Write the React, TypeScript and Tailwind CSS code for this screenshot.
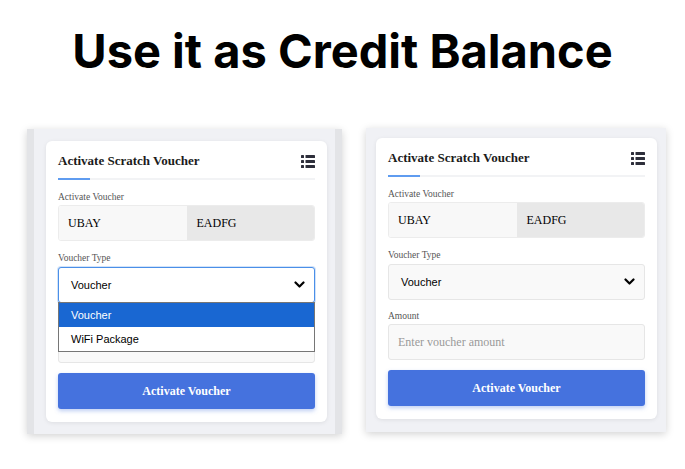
import React from "react";

const serif = { fontFamily: '"Liberation Serif", "Times New Roman", serif' };
const sans = { fontFamily: '"Liberation Sans", Arial, sans-serif' };

function ListIcon() {
  return (
    <svg width="14" height="13" viewBox="0 0 14 13" className="text-[#2e2f3b]">
      {[0, 5, 10].map((y) => (
        <g key={y} fill="currentColor">
          <rect x="0" y={y} width="3" height="3" rx="0.6" />
          <rect x="4.5" y={y} width="9.5" height="3" rx="0.6" />
        </g>
      ))}
    </svg>
  );
}

function Chevron() {
  return (
    <svg width="11" height="8" viewBox="0 0 11 8" className="text-black">
      <path d="M1.5 1.5 L5.5 5.5 L9.5 1.5" fill="none" stroke="currentColor" strokeWidth="2.2" strokeLinecap="round" strokeLinejoin="round" />
    </svg>
  );
}

function VoucherCard({ open }: { open: boolean }) {
  return (
    <div className="w-[281px] bg-white rounded-md shadow-[0_1px_4px_rgba(0,0,0,0.08)] px-3 pt-3 pb-[13px]" style={serif}>
      {/* header */}
      <div className="flex items-center justify-between h-4">
        <h2 className="text-[13px] font-bold text-[#1b1b1b] leading-4">Activate Scratch Voucher</h2>
        <ListIcon />
      </div>
      <div className="mt-[9px] h-[2px] bg-[#f2f3f5] relative">
        <div className="absolute left-0 top-0 h-[2px] w-8 bg-[#5f9cf0]" />
      </div>

      <label className="block mt-[11px] text-[9.5px] leading-3 text-[#555]">Activate Voucher</label>
      <div className="mt-[2px] grid grid-cols-2 h-[36px] border border-[#ececec] rounded-[3px] overflow-hidden text-[12px] text-black">
        <div className="bg-[#f8f8f8] flex items-center pl-[9px]">UBAY</div>
        <div className="bg-[#e8e8e8] flex items-center pl-[10px]">EADFG</div>
      </div>

      <label className="block mt-[11px] text-[9.5px] leading-3 text-[#555]">Voucher Type</label>
      <div className="relative mt-[3px]">
        <div
          className={`h-[36px] rounded-[3px] flex items-center justify-between pl-3 pr-[9px] text-[11px] text-black ${
            open ? "bg-white border border-[#4a8fe8] shadow-[0_0_0_1px_rgba(74,143,232,0.25)]" : "bg-[#f9f9f9] border border-[#e6e6e6]"
          }`}
          style={sans}
        >
          <span>Voucher</span>
          <Chevron />
        </div>
        {open && (
          <div className="absolute left-0 right-0 top-[35px] z-10 bg-white border border-[#767676] text-[11px]" style={sans}>
            <div className="h-6 flex items-center pl-3 bg-[#1967d2] text-white">Voucher</div>
            <div className="h-6 flex items-center pl-3 text-black">WiFi Package</div>
          </div>
        )}
      </div>

      {/* hidden behind the open list on the left card */}
      <label className={`block mt-[10px] text-[9.5px] leading-3 text-[#555] ${open ? "invisible" : ""}`}>Amount</label>
      <div className="mt-[2px] h-[36px] bg-[#f9f9f9] border border-[#e6e6e6] rounded-[3px] flex items-center pl-[9px] text-[12px] text-[#9a9a9a]">
        <span className={open ? "invisible" : ""}>Enter voucher amount</span>
      </div>

      <button className="mt-[10px] w-full h-[36px] rounded-[3px] bg-[#4572de] text-white text-[12px] font-bold shadow-[0_2px_4px_rgba(69,114,222,0.35)]">
        Activate Voucher
      </button>
    </div>
  );
}

export default function App() {
  return (
    <div className="w-[685px] h-[469px] bg-white overflow-hidden">
      <h1 className="pt-[27px] text-center text-[47px] leading-[47px] font-bold text-black" style={{ fontFamily: "Inter, sans-serif" }}>
        Use it as Credit Balance
      </h1>

      <div className="mt-[54px] flex items-start pl-[27px] gap-[23px]">
        {/* left: dropdown open */}
        <div className="mt-[1px] bg-[#f0f1f5] border-l-[7px] border-r-[7px] border-[#e3e4e7] pl-[12px] pr-[8px] pt-[12px] pb-[12px] shadow-[0_2px_8px_rgba(0,0,0,0.18)]">
          <VoucherCard open />
        </div>

        {/* right: closed */}
        <div className="ml-[1px] bg-[#f0f1f5] pl-[10px] pr-[9px] pt-[10px] pb-[13px] shadow-[0_2px_8px_rgba(0,0,0,0.18)]">
          <VoucherCard open={false} />
        </div>
      </div>
    </div>
  );
}
